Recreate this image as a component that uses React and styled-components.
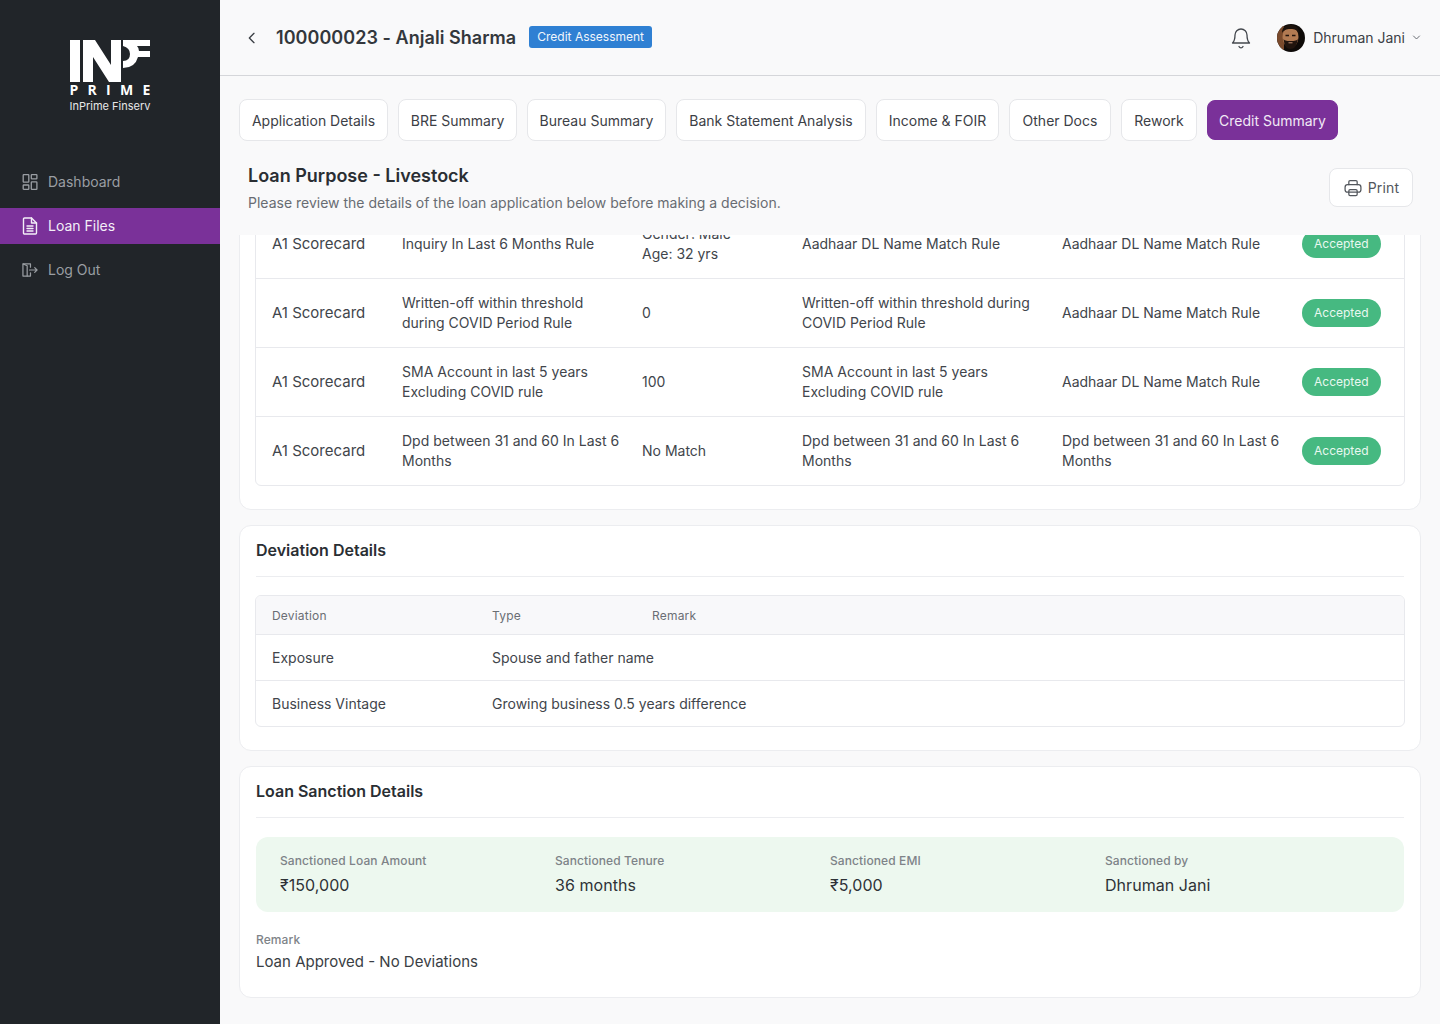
import React from "react";
import styled, { createGlobalStyle } from "styled-components";

const Global = createGlobalStyle`
  html, body { margin: 0; padding: 0; height: 100%; background: #f9f9fa; }
  body { font-family: Inter, "Noto Sans", sans-serif; color: #2a2e33; }
  * { box-sizing: border-box; }
`;

const Page = styled.div`display: flex; width: 1440px; height: 1024px; overflow: hidden;`;
const Sidebar = styled.aside`width: 220px; flex: none; background: #212529; display: flex; flex-direction: column;`;
const Brand = styled.div`display: flex; flex-direction: column; align-items: center; height: 160px; padding-top: 40px; color: #fff;`;
const BrandWord = styled.div`font-size: 14px; line-height: 14px; height: 14px; margin-top: 1px; font-weight: 700; letter-spacing: 9.3px; margin-right: -9px; font-family: "Open Sans", Inter, sans-serif;`;
const BrandSub = styled.div`font-size: 11px; line-height: 14px; margin-top: 2px; color: #e8e8e8;`;
const Nav = styled.nav`display: flex; flex-direction: column; gap: 8px; margin-top: 4px;`;
const NavItem = styled.a`
  display: flex; align-items: center; gap: 10px; height: 36px; padding: 0 0 0 22px;
  font-size: 14px; color: ${p => (p.$active ? "#f3eef7" : "#9a9ea3")};
  background: ${p => (p.$active ? "#7a3199" : "transparent")};
  svg { flex: none; }
`;
const NavText = styled.span`position: relative; top: -1px;`;

const Main = styled.main`flex: 1; min-width: 0; display: flex; flex-direction: column; height: 1024px;`;
const Header = styled.header`height: 76px; flex: none; border-bottom: 1px solid #d5d6da; display: flex; align-items: center; padding: 0 19px 0 24px;`;
const Back = styled.span`display: flex; width: 16px; margin-right: 16px; color: #3a3e44;`;
const Title = styled.h1`margin: 0; font-size: 18px; font-weight: 600; color: #33373c; letter-spacing: .05px;`;
const Stage = styled.span`margin-left: 13px; background: #2f80d3; color: #f1f6fc; font-size: 12px; height: 22px; line-height: 22px; padding: 0 8px; border-radius: 3px; position: relative; top: -1px;`;
const Spacer = styled.div`flex: 1;`;
const Bell = styled.span`display: flex; color: #44484e; margin-right: 24px;`;
const Avatar = styled.svg`width: 28px; height: 28px; border-radius: 50%; margin-right: 8px; flex: none;`;
const UserName = styled.span`font-size: 14px; color: #3c4046;`;
const Chevron = styled.span`display: flex; margin-left: 7px; color: #5a5e64;`;

const Tabs = styled.div`display: flex; gap: 10px; padding: 23px 0 0 19px; flex: none; height: 88px; align-items: flex-start;`;
const Tab = styled.button`
  width: ${p => p.$w}px; height: 42px; padding: 0; font: 400 14px Inter, sans-serif; border-radius: 8px; cursor: pointer; white-space: nowrap;
  color: ${p => (p.$active ? "#f1e9f5" : "#3c4046")};
  background: ${p => (p.$active ? "#7a3199" : "#fff")};
  border: 1px solid ${p => (p.$active ? "#7a3199" : "#e6e7ea")};
  ${p => p.$active && "margin: 1px 0 0 0; height: 40px;"}
`;

const Intro = styled.div`flex: none; height: 71px; display: flex; justify-content: space-between; padding: 0 27px 0 28px;`;
const IntroTitle = styled.h2`margin: 0; font-size: 18px; line-height: 24px; font-weight: 600; color: #2a2e33;`;
const IntroSub = styled.p`margin: 5px 0 0; font-size: 14px; line-height: 20px; color: #686c72;`;
const PrintBtn = styled.button`
  height: 39px; width: 84px; display: flex; align-items: center; justify-content: center; gap: 5px; margin-top: 4px;
  background: #fff; border: 1px solid #e6e7ea; border-radius: 8px; font: 400 14px Inter, sans-serif; letter-spacing: .2px; color: #52565c;
`;

const Scroller = styled.div`flex: 1; min-height: 0; overflow: hidden; padding: 0 19px; display: flex; flex-direction: column; gap: 15px;`;
const Card = styled.section`background: #fff; border: 1px solid #ecedf0; border-radius: 12px; padding: 0 16px 23px; flex: none; ${p => p.$clip && "margin-top: -42px; padding-top: 15px;"}`;
const CardTitle = styled.h3`margin: 0; height: 51px; border-bottom: 1px solid #ecedf0; font-size: 16px; font-weight: 600; line-height: 48px; color: #2a2e33;`;
const Table = styled.div`border: 1px solid #e8e9ed; border-radius: 6px; overflow: hidden; margin: 0 -1px;`;
const ScoreRow = styled.div`
  display: grid; grid-template-columns: 130px 240px 160px 260px 240px 1fr; align-items: center;
  height: 69px; border-bottom: 1px solid #e8e9ed; font-size: 14px; line-height: 20px; color: #41454b;
  &:last-child { border-bottom: 0; height: 68px; }
`;
const Cell = styled.div`padding: 0 0 0 16px; ${p => p.$first && "font-size: 15px;"}`;
const Pill = styled.span`display: inline-block; height: 28px; line-height: 28px; padding: 0 12px; border-radius: 14px; background: #46b981; color: #e9f8f0; font-size: 12px;`;
const DevTable = styled(Table)`margin-top: 18px;`;
const DevRow = styled.div`
  display: grid; grid-template-columns: 220px 160px 1fr; align-items: center; height: 46px;
  border-bottom: 1px solid #e8e9ed; font-size: 14px; color: #41454b;
  &:last-child { border-bottom: 0; height: 45px; }
`;
const DevHead = styled(DevRow)`height: 39px; background: #f8f8fa; font-size: 12px; color: #6a6e74; letter-spacing: .2px;`;
const DevCell = styled.div`padding-left: 16px; white-space: nowrap;`;
const Summary = styled.div`margin-top: 19px; height: 75px; background: #edf8ef; border-radius: 12px; display: grid; grid-template-columns: repeat(4, 275px); padding: 16px 24px 0;`;
const Label = styled.div`font-size: 12px; line-height: 16px; font-weight: 500; letter-spacing: .1px; color: #7e8388;`;
const Value = styled.div`font-size: 16px; line-height: 24px; margin-top: 4px; color: #2e3237; font-weight: 400; letter-spacing: .05px;`;
const Remark = styled.div`margin-top: 20px;`;
const RemarkValue = styled(Value)`font-size: 15px; margin-top: 2px; color: #3a3e44; letter-spacing: 0;`;

const Ico = ({ children, s = 18, sw = 1.5 }) => (
  <svg width={s} height={s} viewBox="0 0 24 24" fill="none" stroke="currentColor" strokeWidth={sw} strokeLinecap="round" strokeLinejoin="round">{children}</svg>
);

const Logo = () => (
  <svg width="80" height="42" viewBox="0 0 80 42" fill="#fff">
    <rect x="0" y="0" width="10" height="42" />
    <path d="M13 0H25L41 25V0H51V42H39L23 17V42H13Z" />
    <path d="M53 0H80V6H67Q69 8 69 11H80V17H68Q65 28 53 28V21Q60 21 60 14Q60 8 53 6Z" />
  </svg>
);

const rows = [
  ["A1 Scorecard", "Inquiry In Last 6 Months Rule", <>Gender: Male<br />Age: 32 yrs</>, "Aadhaar DL Name Match Rule", "Aadhaar DL Name Match Rule"],
  ["A1 Scorecard", <>Written-off within threshold<br />during COVID Period Rule</>, "0", <>Written-off within threshold during<br />COVID Period Rule</>, "Aadhaar DL Name Match Rule"],
  ["A1 Scorecard", <>SMA Account in last 5 years<br />Excluding COVID rule</>, "100", <>SMA Account in last 5 years<br />Excluding COVID rule</>, "Aadhaar DL Name Match Rule"],
  ["A1 Scorecard", <>Dpd between 31 and 60 In Last 6<br />Months</>, "No Match", <>Dpd between 31 and 60 In Last 6<br />Months</>, <>Dpd between 31 and 60 In Last 6<br />Months</>],
];
const tabs = [["Application Details", 149], ["BRE Summary", 119], ["Bureau Summary", 139], ["Bank Statement Analysis", 190], ["Income & FOIR", 123], ["Other Docs", 102], ["Rework", 76], ["Credit Summary", 131]];
const sanction = [["Sanctioned Loan Amount", "₹150,000"], ["Sanctioned Tenure", "36 months"], ["Sanctioned EMI", "₹5,000"], ["Sanctioned by", "Dhruman Jani"]];

export default function App() {
  return (
    <Page>
      <Global />
      <Sidebar>
        <Brand>
          <Logo />
          <BrandWord>PRIME</BrandWord>
          <BrandSub>InPrime Finserv</BrandSub>
        </Brand>
        <Nav>
          <NavItem>
            <svg width="16" height="16" viewBox="0 0 16 16" fill="none" stroke="currentColor" strokeWidth="1.3"><rect x="1.2" y=".7" width="5.6" height="7.5" rx=".6"/><rect x="9.300" y=".7" width="5.600" height="4.200" rx=".6"/><rect x="1.2" y="11" width="5.600" height="4.300" rx=".6"/><rect x="9.300" y="7.800" width="5.600" height="7.500" rx=".6"/></svg>
            <NavText>Dashboard</NavText>
          </NavItem>
          <NavItem $active>
            <svg width="16" height="18" viewBox="0 0 16 18" fill="none" stroke="currentColor" strokeWidth="1.4" strokeLinejoin="round" strokeLinecap="round"><path d="M2.500 1h7l5 5v10a1 1 0 0 1-1 1h-11a1 1 0 0 1-1-1V2a1 1 0 0 1 1-1z"/><path d="M9.500 1v5h5M5 9h6M5 11.500h6M5 14h6"/></svg>
            <NavText>Loan Files</NavText>
          </NavItem>
          <NavItem>
            <svg width="16" height="16" viewBox="0 0 17 16" fill="none" stroke="currentColor" strokeWidth="1.3" strokeLinejoin="round" strokeLinecap="round"><path d="M9 5V1.500H1v13h8V11"/><path d="M1.300 1.600 5.500 3.500v11"/><path d="M8 8h8M13.500 5.500 16 8l-2.500 2.500"/></svg>
            <NavText>Log Out</NavText>
          </NavItem>
        </Nav>
      </Sidebar>
      <Main>
        <Header>
          <Back><Ico s={16} sw={2}><path d="M15 5l-7 7 7 7" /></Ico></Back>
          <Title>100000023 - Anjali Sharma</Title>
          <Stage>Credit Assessment</Stage>
          <Spacer />
          <Bell><Ico s={24} sw={1.3}><path d="M6 9a6 6 0 0 1 12 0c0 5 1.500 7 2.500 8h-17C4.500 16 6 14 6 9z" /><path d="M10 20.500a2.200 2.200 0 0 0 4 0" /></Ico></Bell>
          <Avatar viewBox="0 0 28 28">
            <rect width="28" height="28" fill="#0e0a08" />
            <path d="M0 0h7v28H0z" fill="#7a4a2c" />
            <ellipse cx="13.500" cy="13" rx="8" ry="10.500" fill="#b27a52" />
            <path d="M5 9c0-6 4-8 8.500-8S22 3 22 9c-2-3-4-4-8.500-4S7 6 5 9z" fill="#1c120c" />
            <path d="M6.500 15c1 7 3 10 7 10s6-3 7.500-10c-1 1.500-3 2-7.500 2s-6-.5-7-2z" fill="#21140e" />
            <path d="M8.500 11.500h3.500M15 11.500h3.500" stroke="#20130c" strokeWidth="1.300" />
            <path d="M11.500 18.800h4" stroke="#c48f76" strokeWidth="1" />
          </Avatar>
          <UserName>Dhruman Jani</UserName>
          <Chevron><Ico s={9} sw={2.400}><path d="M4 8l8 8 8-8" /></Ico></Chevron>
        </Header>
        <Tabs>
          {tabs.map(([t, w], i) => <Tab key={t} $w={w} $active={i === tabs.length - 1}>{t}</Tab>)}
        </Tabs>
        <Intro>
          <div>
            <IntroTitle>Loan Purpose - Livestock</IntroTitle>
            <IntroSub>Please review the details of the loan application below before making a decision.</IntroSub>
          </div>
          <PrintBtn>
            <Ico s={20} sw={1.500}><path d="M7 8V4.500A1.500 1.500 0 0 1 8.500 3h7A1.500 1.500 0 0 1 17 4.500V8" /><rect x="2.500" y="8" width="19" height="9" rx="3" /><rect x="7" y="14" width="10" height="7" rx="1.500" /></Ico>
            Print
          </PrintBtn>
        </Intro>
        <Scroller>
          <Card $clip>
            <Table>
              {rows.map((r, i) => (
                <ScoreRow key={i}>
                  <Cell $first>{r[0]}</Cell>
                  <Cell>{r[1]}</Cell>
                  <Cell>{r[2]}</Cell>
                  <Cell>{r[3]}</Cell>
                  <Cell>{r[4]}</Cell>
                  <Cell><Pill>Accepted</Pill></Cell>
                </ScoreRow>
              ))}
            </Table>
          </Card>
          <Card>
            <CardTitle>Deviation Details</CardTitle>
            <DevTable>
              <DevHead><DevCell>Deviation</DevCell><DevCell>Type</DevCell><DevCell>Remark</DevCell></DevHead>
              <DevRow><DevCell>Exposure</DevCell><DevCell>Spouse and father name</DevCell><DevCell /></DevRow>
              <DevRow><DevCell>Business Vintage</DevCell><DevCell>Growing business 0.5 years difference</DevCell><DevCell /></DevRow>
            </DevTable>
          </Card>
          <Card>
            <CardTitle>Loan Sanction Details</CardTitle>
            <Summary>
              {sanction.map(([l, v]) => <div key={l}><Label>{l}</Label><Value>{v}</Value></div>)}
            </Summary>
            <Remark>
              <Label>Remark</Label>
              <RemarkValue>Loan Approved - No Deviations</RemarkValue>
            </Remark>
          </Card>
        </Scroller>
      </Main>
    </Page>
  );
}
